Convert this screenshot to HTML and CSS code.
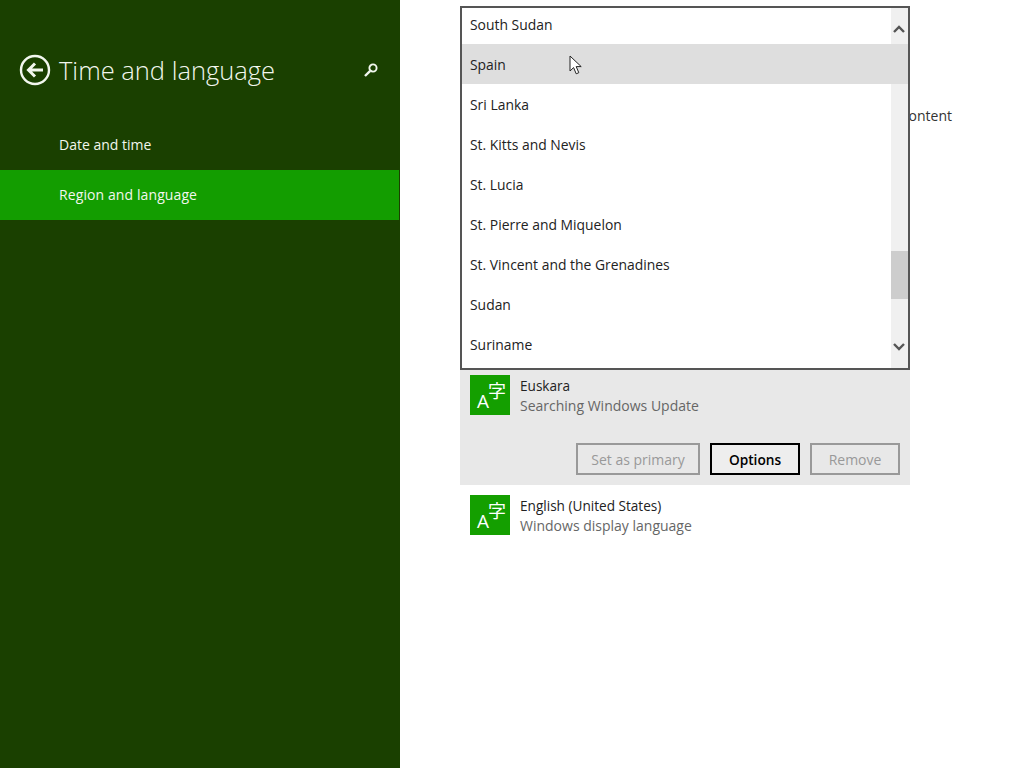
FILE: index.html
```html
<!DOCTYPE html>
<html lang="en">
<head>
<meta charset="utf-8">
<title>Time and language</title>
<link rel="stylesheet" href="styles.css">
</head>
<body>
<div class="app">
  <aside class="sidebar">
    <header class="side-head">
      <svg class="back" width="32" height="32" viewBox="0 0 32 32" fill="none" stroke="#f2f7ee">
        <circle cx="16" cy="16" r="14" stroke-width="2.4"/>
        <path d="M24 16H10M16 9.5 9.5 16l6.5 6.5" stroke-width="3"/>
      </svg>
      <h1 class="title">Time and language</h1>
      <svg class="search" width="16" height="16" viewBox="0 0 16 16" fill="none" stroke="#f2f7ee">
        <circle cx="10" cy="6" r="3.6" stroke-width="1.9"/>
        <path d="M7.2 8.8 2 14" stroke-width="2.4"/>
      </svg>
    </header>
    <nav class="menu">
      <a class="menu-item">Date and time</a>
      <a class="menu-item selected">Region and language</a>
    </nav>
  </aside>
  <main class="content">
    <p class="behind">give you local content</p>
    <section class="languages">
      <div class="lang expanded">
        <div class="lang-row">
          <div class="lang-icon"><span class="a">A</span><span class="zi">字</span></div>
          <div class="lang-text"><div class="lang-name">Euskara</div><div class="lang-sub">Searching Windows Update</div></div>
        </div>
        <div class="actions">
          <button class="btn disabled">Set as primary</button>
          <button class="btn primary">Options</button>
          <button class="btn disabled narrow">Remove</button>
        </div>
      </div>
      <div class="lang">
        <div class="lang-row">
          <div class="lang-icon"><span class="a">A</span><span class="zi">字</span></div>
          <div class="lang-text"><div class="lang-name">English (United States)</div><div class="lang-sub">Windows display language</div></div>
        </div>
      </div>
    </section>
    <div class="dropdown">
      <div class="track"></div>
      <ul class="options">
        <li>South Sudan</li>
        <li class="hover">Spain</li>
        <li>Sri Lanka</li>
        <li>St. Kitts and Nevis</li>
        <li>St. Lucia</li>
        <li>St. Pierre and Miquelon</li>
        <li>St. Vincent and the Grenadines</li>
        <li>Sudan</li>
        <li>Suriname</li>
      </ul>
      <div class="thumb"></div>
      <svg class="arrow up" width="14" height="10" viewBox="0 0 14 10" fill="none" stroke="#555"><path d="M2 8 7 3l5 5" stroke-width="2.4"/></svg>
      <svg class="arrow down" width="14" height="10" viewBox="0 0 14 10" fill="none" stroke="#555"><path d="M2 2l5 5 5-5" stroke-width="2.4"/></svg>
    </div>
    <svg class="cursor" width="14" height="21" viewBox="0 0 14 21"><path d="M1 1v15l3.6-3.4 2.6 6.2 2.6-1.1-2.6-6.1h5z" fill="#fff" stroke="#222" stroke-width="1"/></svg>
  </main>
</div>
</body>
</html>
```
FILE: styles.css
```css
* { box-sizing: border-box; }
html, body { margin: 0; height: 100%; }
body { font-family: "Open Sans", "Noto Sans CJK JP", sans-serif; background: #fff; overflow: hidden; }
.app { display: flex; height: 768px; }
.sidebar { width: 400px; flex: none; background: #1a4000; color: #f2f7ee; }
.side-head { display: flex; align-items: center; height: 120px; padding: 0 21px 0 19px; }
.back { flex: none; margin-right: 8px; margin-top: 20px; }
.title { flex: 1; margin: 20px 0 0; font-size: 25.5px; font-weight: 300; white-space: nowrap; }
.search { flex: none; margin-top: 20px; }
.menu { display: flex; flex-direction: column; }
.menu-item { height: 50px; line-height: 50px; padding-left: 59px; font-size: 14px; margin-right: 1px; }
.selected { background: #139d00; letter-spacing: .1px; }
.content { position: relative; flex: 1; padding: 370px 0 0 60px; }
.behind { position: absolute; top: 105px; right: 72px; margin: 0; font-size: 14px; line-height: 22px; color: #333; white-space: nowrap; }
.languages { width: 450px; }
.lang { padding: 10px 10px 0; height: 60px; }
.expanded { height: 115px; padding-top: 5px; background: #e8e8e8; }
.lang-row { display: flex; gap: 10px; height: 40px; }
.lang-icon { position: relative; width: 40px; height: 40px; background: #149f00; color: #fff; flex: none; }
.a { position: absolute; left: 7px; top: 15px; font-size: 19px; line-height: 22px; }
.zi { position: absolute; left: 18px; top: 6px; font-size: 18px; line-height: 20px; }
.lang-text { font-size: 14px; line-height: 20px; padding-top: 1px; }
.lang-name { color: #222; font-size: 13.6px; }
.lang-sub { color: #666; }
.actions { display: flex; justify-content: flex-end; gap: 10px; margin-top: 28px; }
.btn { height: 32px; width: 124px; padding: 0; background: #e8e8e8; border: 2px solid #999; font: 500 14px "Open Sans", sans-serif; color: #999; }
.primary { width: 90px; border-color: #000; color: #000; background: #eee; font-weight: 600; font-size: 13.7px; }
.narrow { width: 90px; }
.dropdown { position: absolute; left: 60px; top: 6px; width: 450px; height: 364px; background: #fff; border: 2px solid #555; overflow: hidden; }
.track { position: absolute; right: 0; top: 0; bottom: 0; width: 17px; background: #f0f0f0; }
.options { position: relative; list-style: none; margin: -4px 0 0; padding: 0; }
.options li { height: 40px; line-height: 42px; padding-left: 8px; font-size: 13.9px; color: #222; }
.options .hover { background: #dedede; }
.thumb { position: absolute; right: 0; top: 243px; width: 17px; height: 48px; background: #cdcdcd; }
.arrow { position: absolute; right: 2px; }
.up { top: 16px; }
.down { top: 334px; }
.cursor { position: absolute; left: 169px; top: 55px; }
```
